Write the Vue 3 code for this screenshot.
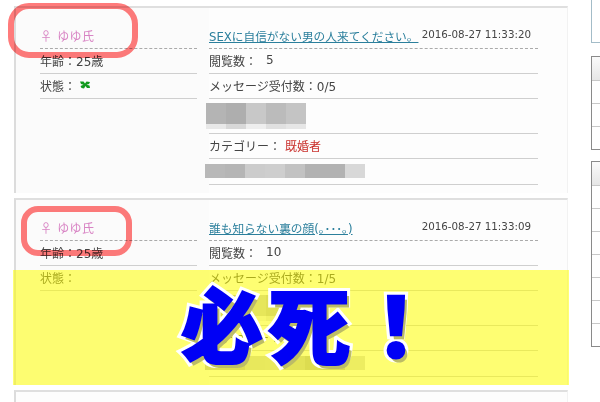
<script setup>
const mosaicA = [
  ['#b4b4b4', '#e8e8e8'],
  ['#aeaeae', '#d8d8d8'],
  ['#c8c8c8', '#eeeeee'],
  ['#bbbbbb', '#e0e0e0'],
  ['#c4c4c4', '#e6e6e6'],
]
const mosaicB = ['#b8b8b8', '#b5b5b5', '#cccccc', '#cecece', '#c2c2c2', '#b2b2b2', '#b2b2b2', '#d8d8d8']
const cards = [
  { title: 'SEXに自信がない男の人来てください。', date: '2016-08-27 11:33:20', views: '5', messages: '0/5', online: true },
  { title: '誰も知らない裏の顔(｡･･･｡)', date: '2016-08-27 11:33:09', views: '10', messages: '1/5', online: false },
]
const smallRows = [1, 2, 3]
const largeRows = [1, 2, 3, 4, 5, 6, 7]
</script>

<template>
  <div class="page">
    <div class="main">
      <article v-for="card in cards" :key="card.date" class="card">
        <div class="profile">
          <div class="row first"><span class="name">♀ ゆゆ氏</span></div>
          <div class="row">年齢：25歳</div>
          <div class="row">
            <span>状態：</span>
            <svg v-if="card.online" class="clover" viewBox="0 0 10 8">
              <path d="M0 .5 L3.5 .5 L5 2.5 L6.5 .5 L10 1 L9 3 L6.5 3.8 L9.5 4.5 L10 7 L7 7 L5.5 5 L4 7.5 L1.5 7 L.5 5 L3.5 3.8 L1 3 Z" fill="#129a1e" />
            </svg>
          </div>
        </div>
        <div class="detail">
          <div class="row first titled">
            <a class="title">{{ card.title }}</a>
            <time class="date">{{ card.date }}</time>
          </div>
          <div class="row"><span>閲覧数：</span><span class="value">{{ card.views }}</span></div>
          <div class="row">メッセージ受付数：{{ card.messages }}</div>
          <div class="row mosaic-row">
            <div class="mosaic">
              <div v-for="cell in mosaicA" :key="cell[0]" class="cell">
                <span class="upper" :style="{ background: cell[0] }"></span>
                <span class="lower" :style="{ background: cell[1] }"></span>
              </div>
            </div>
          </div>
          <div class="row"><span>カテゴリー：</span><span class="cat">既婚者</span></div>
          <div class="row mosaic-row tail">
            <div class="strip">
              <span v-for="(shade, i) in mosaicB" :key="i" class="strip-cell" :style="{ background: shade }"></span>
            </div>
          </div>
        </div>
      </article>
      <article class="card"></article>
    </div>

    <aside class="side">
      <div class="box blue"></div>
      <div class="box">
        <div class="box-head"></div>
        <div v-for="r in smallRows" :key="r" class="box-row"></div>
      </div>
      <div class="box">
        <div class="box-head"></div>
        <div v-for="r in largeRows" :key="r" class="box-row"></div>
      </div>
    </aside>

    <div class="ring ring-one"></div>
    <div class="ring ring-two"></div>
    <div class="highlight"></div>
    <div class="shout">必死！</div>
  </div>
</template>

<style scoped>
.page {
  position: relative;
  display: flex;
  width: 600px;
  height: 402px;
  overflow: hidden;
  background: #fff;
  font-family: "DejaVu Sans", "Noto Sans CJK JP", sans-serif;
  font-size: 12px;
  color: #444;
}
.main {
  flex: none;
  width: 554px;
  margin-left: 14px;
  padding-top: 6px;
}
.card {
  display: flex;
  box-sizing: border-box;
  height: 187px;
  margin-bottom: 5px;
  border-top: 2px solid #dfdfdf;
  border-left: 2px solid #dcdcdc;
  border-right: 1px solid #f2f2f2;
  background: #fdfdfd;
}
.profile {
  flex: none;
  box-sizing: border-box;
  width: 193px;
  padding: 0 12px 0 24px;
  background: #fbfbfb;
}
.detail {
  flex: none;
  width: 329px;
}
.row {
  display: flex;
  align-items: center;
  box-sizing: border-box;
  height: 25px;
  padding-bottom: 2px;
  border-bottom: 1px solid #cfcfcf;
  white-space: nowrap;
}
.first {
  height: 41px;
  padding-top: 14px;
  padding-bottom: 0;
  border-bottom: 1px dashed #aaa;
}
.titled {
  justify-content: space-between;
}
.name {
  color: #d884c4;
  font-family: "Noto Sans CJK JP", sans-serif;
  letter-spacing: 0.3px;
  word-spacing: 2px;
}
.clover {
  width: 10px;
  height: 8px;
  margin-left: 4px;
}
.title {
  color: #2b7f9c;
  text-decoration: underline;
  font-size: 11.7px;
}
.date {
  font-size: 10.3px;
  color: #444;
  margin-right: 7px;
  margin-bottom: 3px;
}
.value {
  margin-left: 9px;
}
.cat {
  margin-left: 4px;
  color: #c9302c;
}
.mosaic-row {
  height: 35px;
  align-items: flex-start;
  padding-top: 4px;
  padding-bottom: 0;
}
.mosaic-row.tail {
  height: 26px;
  padding-top: 5px;
}
.mosaic {
  display: flex;
  margin-left: -3px;
}
.cell {
  display: flex;
  flex-direction: column;
  width: 20px;
}
.upper {
  height: 21px;
}
.lower {
  height: 5px;
}
.strip {
  display: flex;
  margin-left: -4px;
}
.strip-cell {
  width: 20px;
  height: 14px;
}
.side {
  flex: none;
  width: 40px;
  margin-left: 23px;
}
.box {
  box-sizing: border-box;
  margin-bottom: 11px;
  border: 1px solid #8a8a8a;
  background: #fff;
}
.blue {
  height: 43px;
  margin-bottom: 13px;
  border-color: #a3bcc8;
  border-top: 0;
}
.box-head {
  height: 23px;
  border-bottom: 1px solid #c8c8c8;
  background: linear-gradient(#fafafa, #e6e6e6);
}
.box-row {
  height: 22px;
  border-bottom: 1px solid #c8c8c8;
}
.box-row:last-child {
  border-bottom: 0;
}
.ring {
  position: absolute;
  box-sizing: border-box;
  border: 6px solid #ff7b7b;
  mix-blend-mode: multiply;
}
.ring-one {
  left: 8px;
  top: 3px;
  width: 130px;
  height: 55px;
  border-radius: 21px;
}
.ring-two {
  left: 21px;
  top: 206px;
  width: 111px;
  height: 50px;
  border-radius: 17px;
}
.highlight {
  position: absolute;
  left: 13px;
  top: 270px;
  width: 556px;
  height: 115px;
  background: rgba(255, 255, 0, 0.55);
}
.shout {
  position: absolute;
  left: 181px;
  top: 267px;
  font-family: "Noto Sans CJK JP", sans-serif;
  font-size: 82px;
  font-weight: 900;
  letter-spacing: 5px;
  line-height: 110px;
  white-space: nowrap;
  color: #0000f5;
  -webkit-text-stroke: 8px #fff;
  paint-order: stroke fill;
  text-shadow: 3px 4px 0 #bcbc66;
}
.shout::after {
  content: "必死！";
  position: absolute;
  left: 0;
  top: 0;
  -webkit-text-stroke: 2px #0000f5;
  text-shadow: none;
}
</style>
